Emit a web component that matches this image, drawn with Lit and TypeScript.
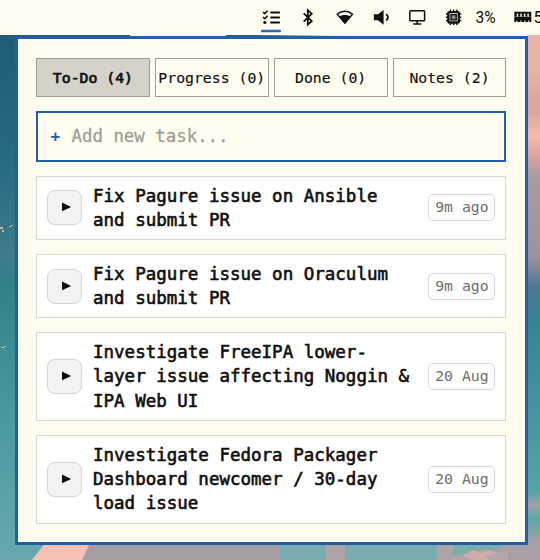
import { LitElement, html, css, svg } from 'lit';
import { customElement, property } from 'lit/decorators.js';
import { classMap } from 'lit/directives/class-map.js';

@customElement('task-item')
export class TaskItem extends LitElement {
  @property({ type: Array }) lines: string[] = [];
  @property() when = '';

  static styles = css`
    :host {
      display: flex;
      align-items: center;
      box-sizing: border-box;
      padding: 7px 10px 7px 10px;
      border: 1px solid #dad8ce;
      background: #ffffff;
    }

    .play {
      display: flex;
      flex: none;
      box-sizing: border-box;
      width: 35px;
      height: 35px;
      padding: 0;
      border: 1px solid #d4d4d4;
      border-radius: 8px;
      background: #f3f3f3;
      color: #100f0f;
    }

    .play svg {
      display: block;
      margin: auto;
    }

    .title {
      flex: 1;
      margin-left: 11px;
      color: #100f0f;
      font-size: 17.5px;
      line-height: 24.3px;
      white-space: nowrap;
      -webkit-text-stroke: 0.6px #100f0f;
    }

    .line {
      display: block;
    }

    .when {
      flex: none;
      box-sizing: border-box;
      width: 67px;
      height: 27px;
      border: 1px solid #d6d6d6;
      border-radius: 5px;
      color: #6f6e69;
      font-size: 14.8px;
      line-height: 24px;
      text-align: center;
      white-space: nowrap;
    }
  `;

  render() {
    return html`
      <button class="play" aria-label="Start">
        <svg width="33" height="33" viewBox="0 0 33 33">
          <path d="M14 11.5 L23.2 15.9 L14 20.3 Z" fill="currentColor" />
        </svg>
      </button>
      <div class="title">
        ${this.lines.map((line) => html`<span class="line">${line}</span>`)}
      </div>
      <span class="when">${this.when}</span>
    `;
  }
}

@customElement('app-root')
export class AppRoot extends LitElement {
  tabs = [
    { label: 'To-Do (4)', active: true },
    { label: 'Progress (0)', active: false },
    { label: 'Done (0)', active: false },
    { label: 'Notes (2)', active: false },
  ];

  tasks = [
    { lines: ['Fix Pagure issue on Ansible', 'and submit PR'], when: '9m ago' },
    { lines: ['Fix Pagure issue on Oraculum', 'and submit PR'], when: '9m ago' },
    {
      lines: ['Investigate FreeIPA lower-', 'layer issue affecting Noggin &', 'IPA Web UI'],
      when: '20 Aug',
    },
    {
      lines: ['Investigate Fedora Packager', 'Dashboard newcomer / 30-day', 'load issue'],
      when: '20 Aug',
    },
  ];

  static styles = css`
    :host {
      display: grid;
      width: 540px;
      height: 560px;
      overflow: hidden;
      font-family: 'DejaVu Sans Mono', 'Liberation Mono', monospace;
    }

    .wallpaper,
    .desktop {
      grid-area: 1 / 1;
    }

    .wallpaper {
      display: block;
    }

    .desktop {
      display: flex;
      flex-direction: column;
      align-items: flex-start;
      min-width: 0;
    }

    .bar {
      width: 540px;
      height: 35px;
      flex: none;
      background: #fffcf0;
    }

    .bar svg {
      display: block;
    }

    .bar text {
      font-family: Roboto, 'Liberation Sans', sans-serif;
      font-size: 16px;
      fill: #100f0f;
    }

    .panel {
      display: flex;
      flex-direction: column;
      box-sizing: border-box;
      width: 513px;
      height: 509px;
      margin: 1px 0 0 15px;
      padding: 19px 18.6px 0 18px;
      border: 3px solid #205ea6;
      background: #fffcf0;
    }

    .tabs {
      display: grid;
      grid-template-columns: repeat(4, 1fr);
      gap: 5px;
    }

    .tab {
      box-sizing: border-box;
      height: 39px;
      min-width: 0;
      padding: 0;
      border: 1px solid #9f9d96;
      background: #fffcf0;
      color: #100f0f;
      font-family: inherit;
      font-size: 14.8px;
      white-space: nowrap;
      -webkit-text-stroke: 0.15px #100f0f;
    }

    .tab.active {
      background: #d5d3c9;
      -webkit-text-stroke: 0.7px #100f0f;
    }

    .entry {
      display: flex;
      align-items: center;
      gap: 11px;
      box-sizing: border-box;
      height: 51px;
      margin-top: 14px;
      padding: 0 0 1px 12.5px;
      border: 2px solid #205ea6;
      color: #9f9d96;
      font-size: 17.4px;
    }

    .plus {
      width: 10px;
      color: #205ea6;
      font-size: 16px;
      font-weight: bold;
    }

    .placeholder {
      -webkit-text-stroke: 0.3px #9f9d96;
    }

    .list {
      display: flex;
      flex-direction: column;
      gap: 13.7px;
      margin-top: 13.5px;
    }
  `;

  renderWallpaper() {
    return svg`
      <svg class="wallpaper" width="540" height="560" viewBox="0 0 540 560">
        <defs>
          <linearGradient id="sea" x1="0" y1="0" x2="0" y2="1">
            <stop offset="0.06" stop-color="#1f5c78" />
            <stop offset="0.3" stop-color="#286b84" />
            <stop offset="0.46" stop-color="#3e7c8c" />
            <stop offset="0.5" stop-color="#30808a" />
            <stop offset="0.75" stop-color="#499aa0" />
            <stop offset="1" stop-color="#68a8ae" />
          </linearGradient>
          <linearGradient id="dusk" x1="0" y1="0" x2="0" y2="1">
            <stop offset="0.06" stop-color="#e8b4a8" />
            <stop offset="0.12" stop-color="#dba8a1" />
            <stop offset="0.15" stop-color="#dba8a1" />
            <stop offset="0.19" stop-color="#f6bcaa" />
            <stop offset="0.23" stop-color="#d9a5a2" />
            <stop offset="0.27" stop-color="#a99ca0" />
            <stop offset="0.42" stop-color="#9b949f" />
            <stop offset="0.48" stop-color="#4f7890" />
            <stop offset="0.55" stop-color="#338690" />
            <stop offset="0.87" stop-color="#55a5a6" />
            <stop offset="0.895" stop-color="#a3a0a6" />
            <stop offset="0.92" stop-color="#5ba7a7" />
            <stop offset="0.97" stop-color="#a99fa8" />
            <stop offset="1" stop-color="#a99fa8" />
          </linearGradient>
          <linearGradient id="haze" x1="0" y1="0" x2="1" y2="0">
            <stop offset="0" stop-color="#fffcf0" stop-opacity="0" />
            <stop offset="1" stop-color="#fffcf0" />
          </linearGradient>
        </defs>
        <rect width="340" height="560" fill="url(#sea)" />
        <rect x="340" y="35" width="200" height="525" fill="url(#dusk)" />
        <path d="M130 35h96v1h-96zM340 35h188v1H340z" fill="#fffcf0" />
        <rect x="250" y="35" width="90" height="1" fill="url(#haze)" />
        <path
          d="M0 227h3v2H0zM2 230h2v2H2zM9 226h2v1H9zM11 225h2v1h-2zM1 347h3v1H1zM4 346h2v1H4z"
          fill="#c6bd9a"
        />
        <rect x="60" y="543" width="220" height="17" fill="#a59ea3" />
        <rect x="280" y="543" width="174" height="17" fill="#b0a3a8" />
        <path d="M45 543H90L82 560H32z" fill="#f6c1b6" />
        <path d="M280 543h46v17h-46zM345 543h92v17h-92z" fill="#7aabae" />
        <path d="M454 543h54l-16 9-40 4z" fill="#79adae" />
        <path d="M452 556l20-4 14-3 14 4 12-5 16-1v13h-76z" fill="#b3a5a9" />
        <path d="M463 556l10-6 8 3 10-3 6 3-12 4 4 3h-14z" fill="#d2abae" />
        <path d="M508 543h20v17h-20z" fill="#a99fa8" />
      </svg>
    `;
  }

  renderBar() {
    return svg`
      <svg width="540" height="35" viewBox="0 0 540 35" fill="none" stroke="#100f0f" stroke-width="1.8">
        <path d="M271 12.5h8.2M271 17.5h8.2M271 22.5h8.2" stroke-linecap="round" />
        <path d="M263.1 12.2l1.7 1.5 2.8-3M263.1 17.2l1.7 1.5 2.8-3" stroke-width="1.6" />
        <circle cx="264.8" cy="22.5" r="1.5" fill="#100f0f" stroke="none" />
        <rect x="261" y="29.8" width="20" height="2.4" rx="1" fill="#3068b3" stroke="none" />
        <path d="M303.7 13.3l8 7.9-3.9 3.4V10.2l3.9 3.5-8 7.9" />
        <path d="M337.2 14.2c4.5-3.8 10.9-3.8 15.4 0L344.9 23.2z" stroke-width="1.5" />
        <path d="M339 16.6c3.6-2 8.2-2 11.8 0l-5.9 6.8z" fill="#100f0f" stroke="none" />
        <path d="M373.8 14.3h4.2l5.6-4.4v14.8l-5.6-4.4h-4.2z" fill="#100f0f" stroke="none" />
        <path d="M386 14.3c2.6 1.2 2.6 4.8 0 6" />
        <rect x="409.8" y="10.8" width="14.8" height="10" rx="0.8" stroke-width="1.5" />
        <path d="M417.2 21v2.7M413.2 24h8" stroke-width="1.6" />
        <rect x="448.4" y="12.1" width="10.4" height="10.4" rx="1" stroke-width="2.4" />
        <rect x="451" y="14.7" width="5.2" height="5.2" fill="#8d8b85" stroke-width="1.4" />
        <path
          d="M450.4 9.5v2M450.4 23v2M453.6 9.5v2M453.6 23v2M456.8 9.5v2M456.8 23v2M446 14h2M446 17.3h2M446 20.5h2M459 14h2.3M459 17.3h2.3M459 20.5h2.3"
          stroke-width="1.4"
        />
        <path d="M514.3 11.7h17v5h-17zM514.3 17h17v5h-17z" fill="#100f0f" stroke="none" />
        <path d="M517.5 13.4v3.4M521 13.4v3.4M524.6 13.4v3.4M528.1 13.4v3.4" stroke="#fffcf0" stroke-width="1.4" />
        <path d="M516.8 20.5v2M520.8 20.5v2M524.8 20.5v2M528.8 20.5v2" stroke="#fffcf0" stroke-width="1" />
        <g stroke="none">
          <text x="475.5" y="23" textLength="20" lengthAdjust="spacingAndGlyphs">3%</text>
          <text x="533.5" y="23">5</text>
        </g>
      </svg>
    `;
  }

  render() {
    return html`
      ${this.renderWallpaper()}
      <main class="desktop">
        <header class="bar">${this.renderBar()}</header>
        <section class="panel">
          <nav class="tabs">
            ${this.tabs.map(
              (tab) => html`
                <button class=${classMap({ tab: true, active: tab.active })}>${tab.label}</button>
              `
            )}
          </nav>
          <div class="entry">
            <span class="plus">+</span>
            <span class="placeholder">Add new task...</span>
          </div>
          <div class="list">
            ${this.tasks.map(
              (task) => html`<task-item .lines=${task.lines} .when=${task.when}></task-item>`
            )}
          </div>
        </section>
      </main>
    `;
  }
}
